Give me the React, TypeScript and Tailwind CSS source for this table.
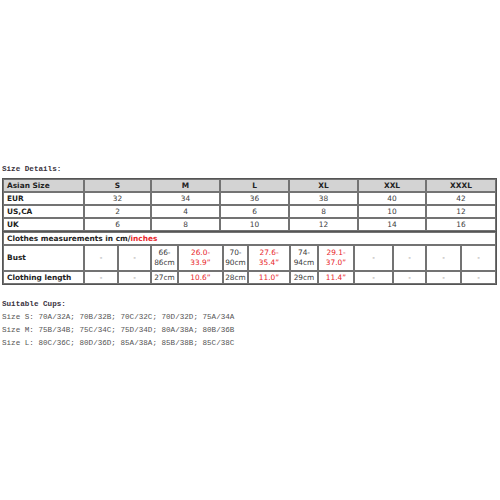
const sizes = ["S", "M", "L", "XL", "XXL", "XXXL"];

const topRows = [
  { label: "EUR", values: ["32", "34", "36", "38", "40", "42"] },
  { label: "US,CA", values: ["2", "4", "6", "8", "10", "12"] },
  { label: "UK", values: ["6", "8", "10", "12", "14", "16"] },
];

type Cell = { lines: string[]; red?: boolean };

const bust: Cell[] = [
  { lines: ["-"] },
  { lines: ["-"] },
  { lines: ["66-", "86cm"] },
  { lines: ["26.0-", "33.9\u02ee"], red: true },
  { lines: ["70-", "90cm"] },
  { lines: ["27.6-", "35.4\u02ee"], red: true },
  { lines: ["74-", "94cm"] },
  { lines: ["29.1-", "37.0\u02ee"], red: true },
  { lines: ["-"] },
  { lines: ["-"] },
  { lines: ["-"] },
  { lines: ["-"] },
];

const length: Cell[] = [
  { lines: ["-"] },
  { lines: ["-"] },
  { lines: ["27cm"] },
  { lines: ["10.6\u02ee"], red: true },
  { lines: ["28cm"] },
  { lines: ["11.0\u02ee"], red: true },
  { lines: ["29cm"] },
  { lines: ["11.4\u02ee"], red: true },
  { lines: ["-"] },
  { lines: ["-"] },
  { lines: ["-"] },
  { lines: ["-"] },
];

const cups = [
  "Size S: 70A/32A; 70B/32B; 70C/32C; 70D/32D; 75A/34A",
  "Size M: 75B/34B; 75C/34C; 75D/34D; 80A/38A; 80B/36B",
  "Size L: 80C/36C; 80D/36D; 85A/38A; 85B/38B; 85C/38C",
];

const cell = "border border-[#737373] flex items-center h-[13px]";

const tone = (c: Cell) =>
  c.red ? "text-[#e8262b]" : c.lines[0] === "-" ? "text-[#777]" : "";

export default function App() {
  return (
    <div className="min-h-[500px] w-[500px] bg-white pt-[163px] px-[2px]">
      <div className="font-['Liberation_Mono',monospace] text-[7.6px] leading-[12px] font-bold text-[#3a3340]">
        Size Details:
      </div>

      <div className="mt-[3px] w-[495px] font-['DejaVu_Sans',sans-serif] text-[7.4px] text-[#3c3c3c]">
        <div className="border border-[#555] grid grid-cols-[81px_67px_69px_69px_69px_68px_1fr]">
          <div className={`${cell} bg-[#d3d3d3] font-bold px-[3px] text-[#222]`}>Asian Size</div>
          {sizes.map((s) => (
            <div key={s} className={`${cell} bg-[#d3d3d3] font-bold justify-center text-[#222]`}>
              {s}
            </div>
          ))}
          {topRows.map((r) => (
            <>
              <div key={r.label} className={`${cell} font-bold px-[3px] text-[#222]`}>
                {r.label}
              </div>
              {r.values.map((v, i) => (
                <div key={r.label + i} className={`${cell} justify-center`}>
                  {v}
                </div>
              ))}
            </>
          ))}
        </div>

        <div className="border border-t-0 border-[#555] grid grid-cols-[81px_34px_33px_27px_45px_25px_42px_28px_36px_39px_33px_35px_1fr]">
          <div className={`${cell} col-span-13 font-bold px-[3px] text-[#222]`}>
            Clothes measurements in cm/<span className="text-[#e8262b]">inches</span>
          </div>
          <div className={`${cell} h-[26px] font-bold px-[3px] text-[#222]`}>Bust</div>
          {bust.map((c, i) => (
            <div
              key={"b" + i}
              className={`${cell} h-[26px] flex-col justify-center leading-[10px] ${tone(c)}`}
            >
              {c.lines.map((l) => (
                <span key={l}>{l}</span>
              ))}
            </div>
          ))}
          <div className={`${cell} font-bold px-[3px] text-[#222]`}>Clothing length</div>
          {length.map((c, i) => (
            <div key={"l" + i} className={`${cell} justify-center ${tone(c)}`}>
              {c.lines[0]}
            </div>
          ))}
        </div>
      </div>

      <div className="mt-[13px] font-['Liberation_Mono',monospace] text-[7.6px] leading-[13px] text-[#555]">
        <div className="font-bold text-[#3a3340]">Suitable Cups:</div>
        {cups.map((c) => (
          <div key={c}>{c}</div>
        ))}
      </div>
    </div>
  );
}
